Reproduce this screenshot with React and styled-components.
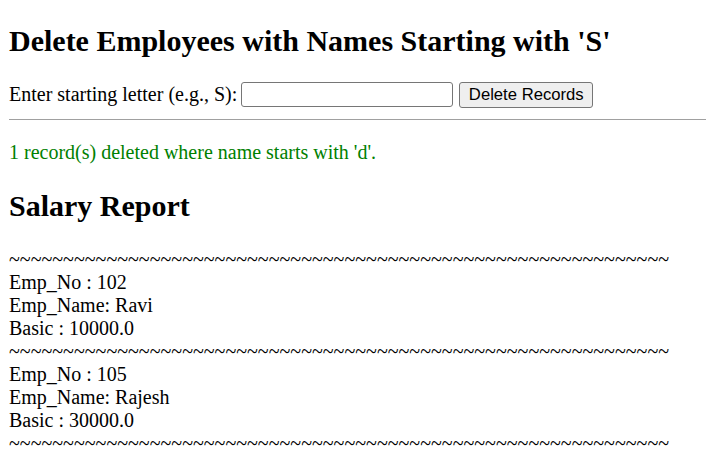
import React from "react";
import styled, { createGlobalStyle } from "styled-components";

const GlobalStyle = createGlobalStyle`
  body {
    margin: 0;
    background: #ffffff;
    color: #000000;
    font-family: "Liberation Serif", "Times New Roman", serif;
    font-size: 20px;
    line-height: 23px;
  }
`;

const Page = styled.div`
  padding: 24px 0 0 9px;
`;

const Title = styled.h1`
  font-size: 30px;
  line-height: 34.5px;
  font-weight: bold;
  margin: 0 0 23px;
`;

const DeleteForm = styled.form`
  display: flex;
  align-items: center;
  height: 26px;
  margin: 0;
`;

const Label = styled.span`
  margin-right: 4px;
`;

const LetterInput = styled.input`
  width: 212px;
  height: 25px;
  box-sizing: border-box;
  border: 1px solid #767676;
  border-radius: 3px;
  padding: 1px 3px;
  margin: 0 6px 0 0;
  font-family: "Liberation Sans", Arial, sans-serif;
  font-size: 16.67px;
  background: #fff;
`;

const SubmitButton = styled.button`
  width: 134px;
  height: 26px;
  box-sizing: border-box;
  padding: 0;
  border: 1px solid #767676;
  border-radius: 3px;
  background: #efefef;
  font-family: "Liberation Sans", Arial, sans-serif;
  font-size: 16.67px;
  color: #000;
`;

const Rule = styled.hr`
  border: none;
  border-top: 1px solid #a0a0a0;
  height: 0;
  margin: 11px 0 0;
`;

const Status = styled.p`
  color: rgb(0, 128, 0);
  margin: 21px 0 0;
`;

const Subtitle = styled.h2`
  font-size: 30px;
  line-height: 34.5px;
  font-weight: bold;
  margin: 25px 0 25px;
`;

const Report = styled.div`
  line-height: 23px;
`;

const Line = styled.div`
  white-space: nowrap;
`;

const TILDES = "~".repeat(61);

const records = [
  { no: 102, name: "Ravi", basic: "10000.0" },
  { no: 105, name: "Rajesh", basic: "30000.0" },
];

export default function App() {
  return (
    <>
      <GlobalStyle />
      <Page>
        <Title>Delete Employees with Names Starting with 'S'</Title>
        <DeleteForm onSubmit={(e) => e.preventDefault()}>
          <Label>Enter starting letter (e.g., S):</Label>
          <LetterInput type="text" name="letter" />
          <SubmitButton type="submit">Delete Records</SubmitButton>
        </DeleteForm>
        <Rule />
        <Status>1 record(s) deleted where name starts with 'd'.</Status>
        <Subtitle>Salary Report</Subtitle>
        <Report>
          <Line>{TILDES}</Line>
          {records.map((r) => (
            <React.Fragment key={r.no}>
              <Line>Emp_No : {r.no}</Line>
              <Line>Emp_Name: {r.name}</Line>
              <Line>Basic : {r.basic}</Line>
              <Line>{TILDES}</Line>
            </React.Fragment>
          ))}
        </Report>
      </Page>
    </>
  );
}
